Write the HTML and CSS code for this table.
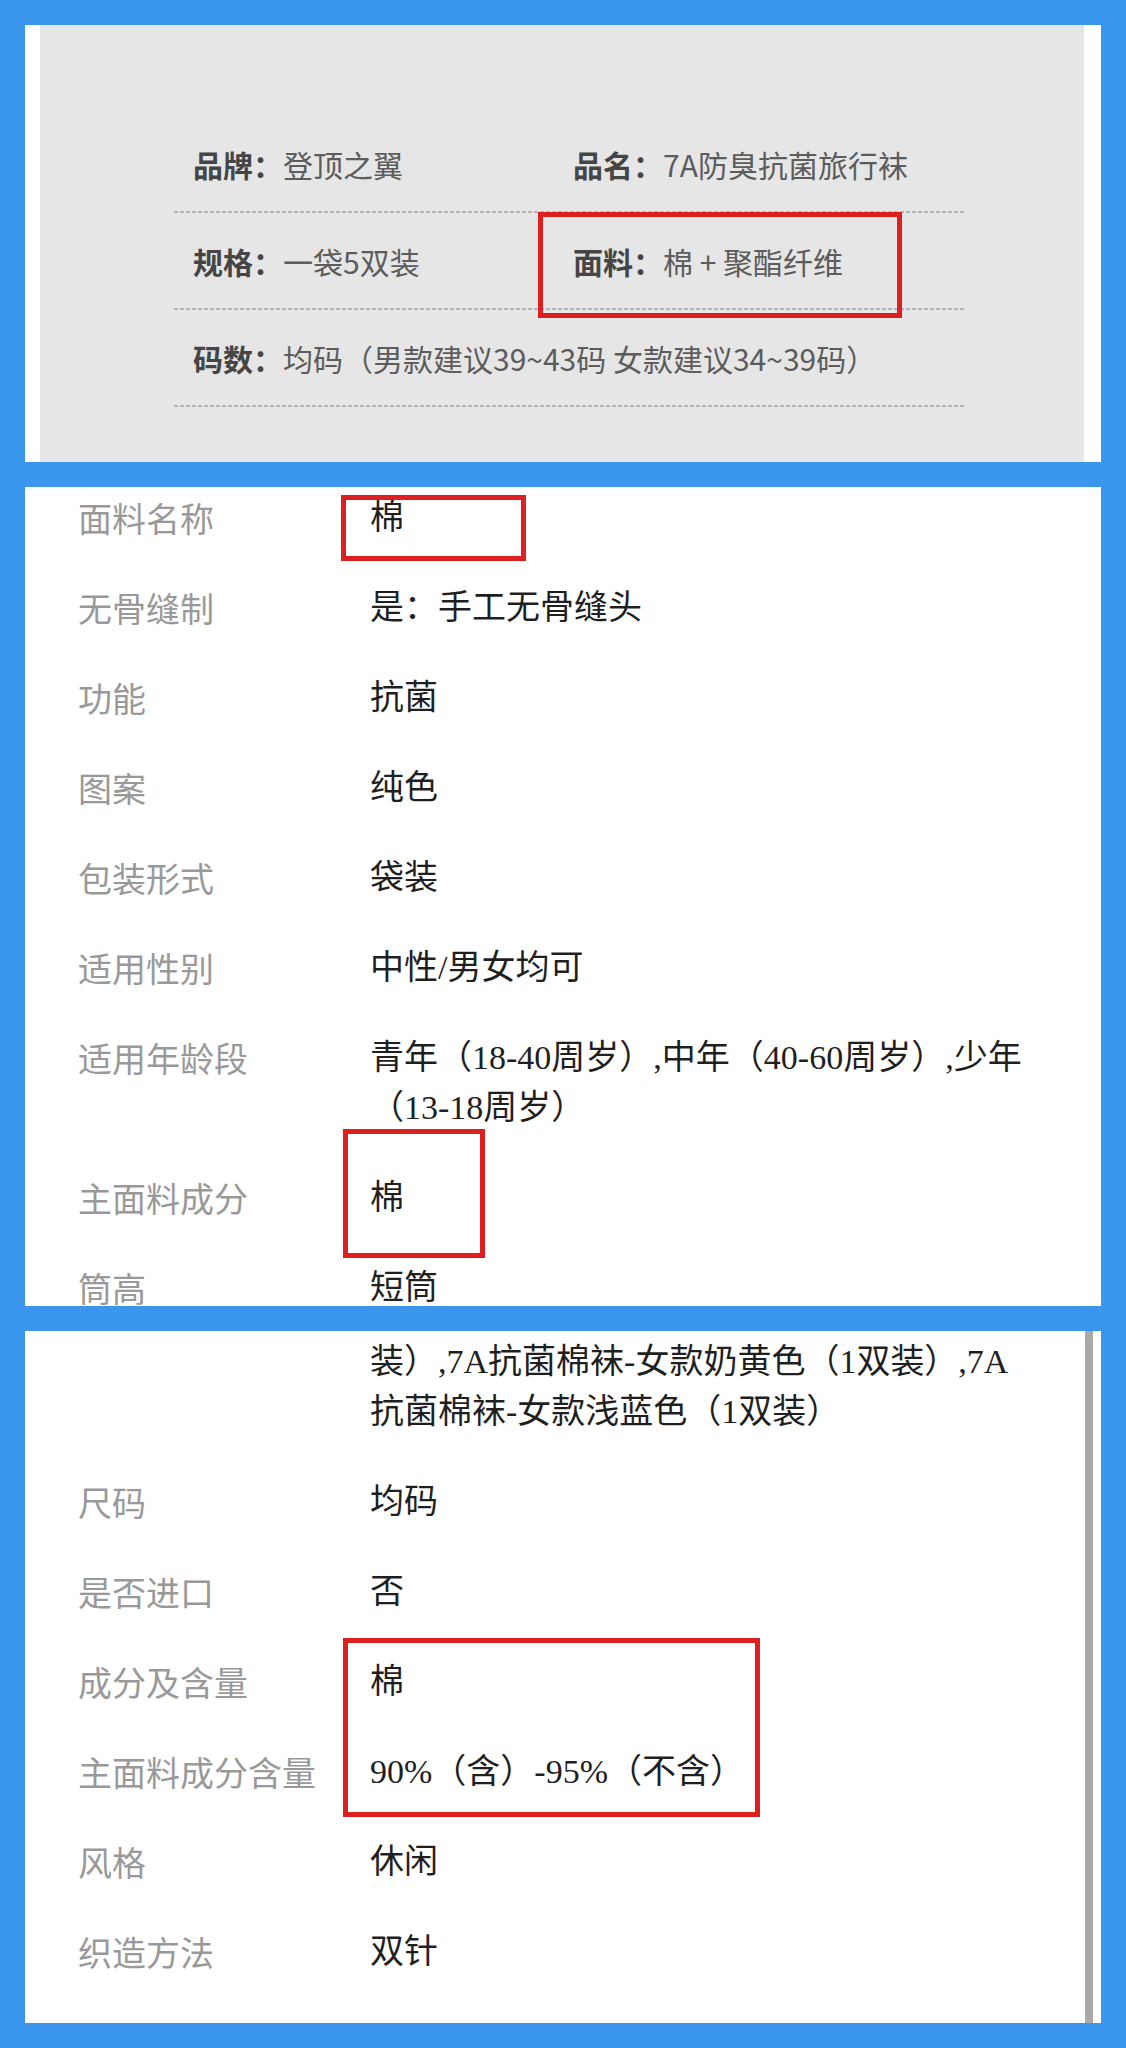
FILE: index.html
```html
<!DOCTYPE html>
<html lang="zh-CN">
<head>
    <meta charset="UTF-8">
    <meta name="viewport" content="width=device-width, initial-scale=1.0">
    <title>7A防臭抗菌旅行袜 - 商品参数</title>
    <link rel="stylesheet" href="styles.css">
</head>
<body>
    <div class="page">
        <!-- 详情页参数图 -->
        <section class="shot shot-info">
            <div class="info-sheet">
                <div class="info-row">
                    <div class="info-cell"><b>品牌：</b>登顶之翼</div>
                    <div class="info-cell"><b>品名：</b>7A防臭抗菌旅行袜</div>
                </div>
                <div class="info-row">
                    <div class="info-cell"><b>规格：</b>一袋5双装</div>
                    <div class="info-cell"><b>面料：</b>棉 + 聚酯纤维</div>
                </div>
                <div class="info-row">
                    <div class="info-cell"><b>码数：</b>均码（男款建议39~43码 女款建议34~39码）</div>
                </div>
            </div>
            <span class="mark mark-fabric"></span>
        </section>

        <!-- 商品参数列表 1 -->
        <section class="shot shot-params">
            <div class="attrs attrs-first">
                <div class="attr"><div class="attr-name">面料名称</div><div class="attr-value">棉</div></div>
                <div class="attr"><div class="attr-name">无骨缝制</div><div class="attr-value">是：手工无骨缝头</div></div>
                <div class="attr"><div class="attr-name">功能</div><div class="attr-value">抗菌</div></div>
                <div class="attr"><div class="attr-name">图案</div><div class="attr-value">纯色</div></div>
                <div class="attr"><div class="attr-name">包装形式</div><div class="attr-value">袋装</div></div>
                <div class="attr"><div class="attr-name">适用性别</div><div class="attr-value">中性/男女均可</div></div>
                <div class="attr"><div class="attr-name">适用年龄段</div><div class="attr-value">青年（18-40周岁）,中年（40-60周岁）,少年（13-18周岁）</div></div>
                <div class="attr"><div class="attr-name">主面料成分</div><div class="attr-value">棉</div></div>
                <div class="attr"><div class="attr-name">筒高</div><div class="attr-value">短筒</div></div>
            </div>
            <span class="mark mark-name"></span>
            <span class="mark mark-main"></span>
        </section>

        <!-- 商品参数列表 2 -->
        <section class="shot shot-params shot-scroll">
            <div class="scroll-area">
                <div class="attrs">
                    <div class="attr attr-cont"><div class="attr-name"></div><div class="attr-value">装）,7A抗菌棉袜-女款奶黄色（1双装）,7A抗菌棉袜-女款浅蓝色（1双装）</div></div>
                    <div class="attr"><div class="attr-name">尺码</div><div class="attr-value">均码</div></div>
                    <div class="attr"><div class="attr-name">是否进口</div><div class="attr-value">否</div></div>
                    <div class="attr"><div class="attr-name">成分及含量</div><div class="attr-value">棉</div></div>
                    <div class="attr"><div class="attr-name">主面料成分含量</div><div class="attr-value">90%（含）-95%（不含）</div></div>
                    <div class="attr"><div class="attr-name">风格</div><div class="attr-value">休闲</div></div>
                    <div class="attr"><div class="attr-name">织造方法</div><div class="attr-value">双针</div></div>
                </div>
            </div>
            <span class="mark mark-content"></span>
        </section>
    </div>
</body>
</html>
```

FILE: styles.css
```css
* {
    margin: 0;
    padding: 0;
    box-sizing: border-box;
}

body {
    background-color: #3b97ee;
    font-family: "Noto Sans CJK SC", sans-serif;
}

.page {
    display: flex;
    flex-direction: column;
    gap: 25px;
    padding: 25px;
}

.shot {
    position: relative;
    width: 1076px;
    background-color: #fff;
    overflow: hidden;
}

/* ---------- 参数图 ---------- */

.shot-info {
    height: 437px;
    padding: 0 17px 0 15px;
}

.info-sheet {
    height: 100%;
    background-color: #e6e6e6;
    padding: 91px 0 0 134px;
}

.info-row {
    display: flex;
    align-items: center;
    width: 790px;
    height: 97px;
    padding: 0 0 2px 19px;
    background-image: linear-gradient(to right, #b3b3b3 66%, transparent 66%);
    background-size: 6px 2px;
    background-repeat: repeat-x;
    background-position: left bottom;
    font-size: 30px;
    line-height: 40px;
    color: #5c5c5c;
}

.info-cell {
    flex: 0 0 380px;
    white-space: nowrap;
}

.info-cell b {
    font-weight: bold;
    color: #454545;
}

/* ---------- 参数列表 ---------- */

.shot-params {
    height: 819px;
    padding-left: 53px;
}

.attrs-first {
    margin-top: -14px;
}

.attr {
    display: flex;
    padding: 20px 0;
    font-size: 34px;
    line-height: 50px;
}

.attr-name {
    flex: 0 0 292px;
    color: #999;
}

.attr-value {
    width: 660px;
    color: #1f1f1f;
    font-family: "Liberation Serif", "Noto Sans CJK SC", serif;
}

.shot-scroll {
    height: 692px;
    padding: 0 8px 0 0;
}

.scroll-area {
    height: 100%;
    padding: 6px 0 0 53px;
    border-right: 8px solid #a9a9a9;
}

.attr-cont {
    padding-top: 0;
}

/* ---------- 红框标注 ---------- */

.mark {
    position: absolute;
    border: 5px solid #de1f1f;
}

.mark-fabric {
    left: 513px;
    top: 187px;
    width: 364px;
    height: 106px;
}

.mark-name {
    left: 316px;
    top: 8px;
    width: 185px;
    height: 66px;
}

.mark-main {
    left: 318px;
    top: 642px;
    width: 142px;
    height: 129px;
}

.mark-content {
    left: 318px;
    top: 307px;
    width: 417px;
    height: 179px;
}
```
